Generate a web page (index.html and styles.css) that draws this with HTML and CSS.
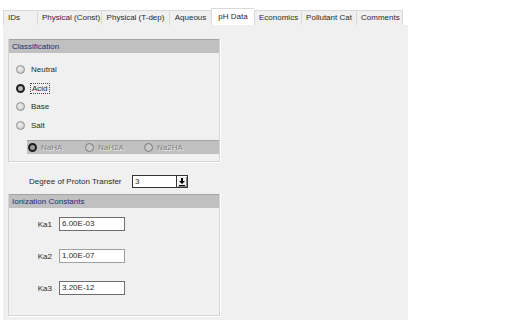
FILE: index.html
```html
<!DOCTYPE html>
<html lang="en">
<head>
    <meta charset="UTF-8">
    <title>pH Data</title>
    <link rel="stylesheet" href="styles.css">
</head>
<body>

    <div class="tabs">
        <div class="tab t-ids">IDs</div>
        <div class="tab t-pc">Physical (Const)</div>
        <div class="tab t-pt">Physical (T-dep)</div>
        <div class="tab t-aq">Aqueous</div>
        <div class="tab t-ph active">pH Data</div>
        <div class="tab t-ec">Economics</div>
        <div class="tab t-pol">Pollutant Cat</div>
        <div class="tab t-com">Comments</div>
    </div>

    <div class="page">
        <div class="group classification">
            <div class="group-head">Classification</div>
            <div class="radios">
                <div class="radio-row"><span class="radio"></span><span>Neutral</span></div>
                <div class="radio-row"><span class="radio on"></span><span class="focus">Acid</span></div>
                <div class="radio-row"><span class="radio"></span><span>Base</span></div>
                <div class="radio-row"><span class="radio"></span><span>Salt</span></div>
            </div>
            <div class="salt-bar">
                <div class="salt-opt s1"><span class="radio on dim"></span><span class="disabled">NaHA</span></div>
                <div class="salt-opt s2"><span class="radio dim"></span><span class="disabled">NaH2A</span></div>
                <div class="salt-opt s3"><span class="radio dim"></span><span class="disabled">Na2HA</span></div>
            </div>
        </div>

        <div class="degree-row">
            <span class="degree-label">Degree of Proton Transfer</span>
            <span class="combo">3</span>
            <span class="combo-btn">
                <svg width="8" height="8" viewBox="0 0 8 8">
                    <path d="M3 0h2v3h2L4 6 1 3h2z" fill="#000"/>
                    <rect x="1" y="7" width="6" height="1" fill="#000"/>
                </svg>
            </span>
        </div>

        <div class="group ionization">
            <div class="group-head">Ionization Constants</div>
            <div class="ka-list">
                <div class="ka-row"><span class="ka-label">Ka1</span><span class="field dark">6.00E-03</span></div>
                <div class="ka-row"><span class="ka-label">Ka2</span><span class="field">1.00E-07</span></div>
                <div class="ka-row"><span class="ka-label">Ka3</span><span class="field dark">3.20E-12</span></div>
            </div>
        </div>
    </div>

</body>
</html>
```

FILE: styles.css
```css
body {
    margin: 0;
    background-color: #fff;
    font-family: "Liberation Sans", Arial, sans-serif;
    font-size: 8px;
    color: #2a2a2a;
}

.tabs {
    display: flex;
    align-items: flex-end;
    height: 25px;
    padding-left: 3px;
    background-color: #fff;
}

.tab {
    box-sizing: border-box;
    height: 15px;
    line-height: 13px;
    padding: 0 4px;
    background-color: #f0f0f0;
    border: 1px solid #d9d9d9;
    border-right: none;
    border-bottom: none;
    text-align: center;
    white-space: nowrap;
}

.tab.t-com {
    border-right: 1px solid #d9d9d9;
}

.tab.active {
    height: 17px;
    line-height: 15px;
    background-color: #fff;
}

.t-ids { width: 34px; text-align: left; }
.t-pc { width: 64px; }
.t-pt { width: 68px; }
.t-aq { width: 42px; }
.t-ph { width: 43px; }
.t-ec { width: 47px; }
.t-pol { width: 55px; }
.t-com { width: 47px; }

.page {
    width: 405px;
    height: 295px;
    box-sizing: border-box;
    margin-left: 3px;
    padding: 14px 0 0 5px;
    background-color: #f0f0f0;
}

.group {
    width: 212px;
    box-sizing: border-box;
    border: 1px solid #d5d5d5;
    border-top: none;
    box-shadow: 1px 1px 0 #fff;
}

.group-head {
    height: 14px;
    line-height: 13px;
    box-sizing: border-box;
    padding-left: 3px;
    background-color: #c0c0c0;
    border-top: 1px solid #a5a5a5;
    color: #1d2c72;
}

.classification {
    height: 123px;
}

.radios {
    padding: 7px 0 0 7px;
}

.radio-row {
    display: flex;
    align-items: center;
    height: 18.7px;
    gap: 6px;
}

.radio {
    box-sizing: border-box;
    width: 9px;
    height: 9px;
    border-radius: 50%;
    border: 1px solid #8e8e8e;
    background: radial-gradient(circle at 40% 40%, #eeeeee, #c4c4c4);
}

.radio.on {
    border: 2px solid #1e1e1e;
    background: #b8b8b8;
}

.focus {
    outline: 1px dotted #444;
    padding: 0 1px;
}

.salt-bar {
    display: flex;
    align-items: center;
    height: 14px;
    box-sizing: border-box;
    margin: 5px 0 0 18px;
    padding-left: 1px;
    background-color: #c0c0c0;
    border-top: 1px solid #a5a5a5;
}

.salt-opt {
    display: flex;
    align-items: center;
    gap: 4px;
}

.s1 { width: 57px; }
.s2 { width: 59px; }

.radio.dim {
    border-color: #7a7a7a;
    background: #c8c8c8;
}

.radio.on.dim {
    border-color: #1e1e1e;
    background: #9a9a9a;
}

.disabled {
    color: #808080;
    text-shadow: 1px 1px 0 #ececec;
}

.degree-row {
    display: flex;
    align-items: center;
    height: 13px;
    margin: 13px 0 0 21px;
}

.degree-label {
    width: 103px;
}

.combo {
    box-sizing: border-box;
    width: 44px;
    height: 13px;
    line-height: 11px;
    padding-left: 2px;
    background-color: #fff;
    border: 1px solid #333;
    border-right: none;
}

.combo-btn {
    box-sizing: border-box;
    width: 12px;
    height: 13px;
    display: flex;
    align-items: center;
    justify-content: center;
    background-color: #f0f0f0;
    border: 1px solid #333;
    box-shadow: inset 1px 1px 0 #fff, inset -1px -1px 0 #888;
}

.ionization {
    height: 122px;
    margin-top: 6px;
}

.ka-list {
    padding-top: 9px;
}

.ka-row {
    display: flex;
    align-items: center;
    height: 14px;
    margin-bottom: 18px;
}

.ka-label {
    width: 43px;
    text-align: right;
    padding-right: 7px;
}

.field {
    box-sizing: border-box;
    width: 66px;
    height: 14px;
    line-height: 12px;
    padding-left: 2px;
    background-color: #fff;
    border: 1px solid #a0a0a0;
}

.field.dark {
    border-color: #6e6e6e;
}
```
